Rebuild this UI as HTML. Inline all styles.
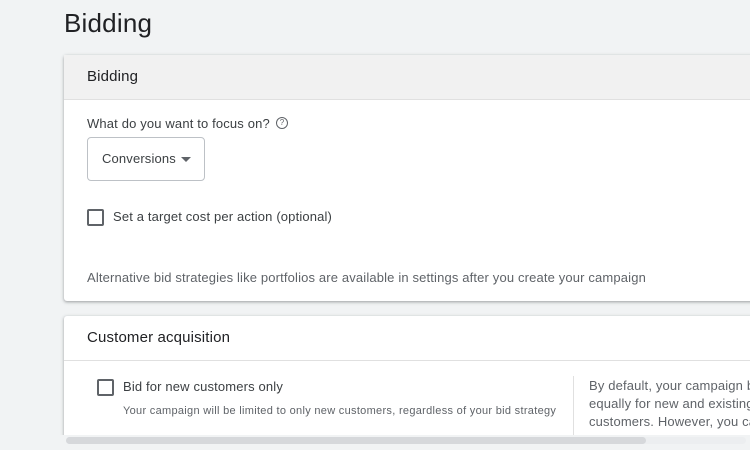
<!DOCTYPE html>
<html><head><style>
html,body{margin:0;width:750px;height:450px;overflow:hidden}
body{background:#f1f3f4;font-family:"Liberation Sans",Arial,sans-serif;position:relative;color:#3c4043}
.h1{position:absolute;left:64px;top:8px;font-size:26px;color:#202124;letter-spacing:0.2px}
.card{position:absolute;left:64px;width:700px;background:#fff;box-shadow:0 1px 2px rgba(60,64,67,.3),0 1px 3px 1px rgba(60,64,67,.15);border-radius:3px}
.hd{height:44px;line-height:44px;padding-left:23px;font-size:15px;color:#202124;border-bottom:1px solid #e0e0e0;letter-spacing:0.15px}
.t{position:absolute;font-size:13px;color:#3c4043;white-space:nowrap;letter-spacing:0.15px}
.cb{position:absolute;width:13px;height:13px;border:2px solid #5f6368;border-radius:2px}
</style></head><body>
<div class="h1">Bidding</div>
<div class="card" style="top:55px;height:246px">
<div class="hd" style="background:#f1f1f1">Bidding</div>
<div class="t" style="left:23px;top:61px">What do you want to focus on?</div>
<div style="position:absolute;left:212px;top:62px;width:10px;height:10px;border:1.3px solid #5f6368;border-radius:50%;font-size:8px;line-height:10px;text-align:center;color:#5f6368">?</div>
<div style="position:absolute;left:23px;top:82px;width:116px;height:42px;border:1px solid #bdc1c6;border-radius:4px"></div>
<div class="t" style="left:38px;top:96px">Conversions</div>
<div style="position:absolute;left:117px;top:102px;width:0;height:0;border-left:5px solid transparent;border-right:5px solid transparent;border-top:5px solid #5f6368"></div>
<div class="cb" style="left:23px;top:154px"></div>
<div class="t" style="left:49px;top:154px">Set a target cost per action (optional)</div>
<div class="t" style="left:23px;top:215px;color:#5f6368">Alternative bid strategies like portfolios are available in settings after you create your campaign</div>
</div>
<div class="card" style="top:316px;height:134px">
<div class="hd">Customer acquisition</div>
<div class="cb" style="left:33px;top:63px"></div>
<div class="t" style="left:59px;top:63px">Bid for new customers only</div>
<div class="t" style="left:59px;top:89px;font-size:11px;color:#5f6368;letter-spacing:0.3px">Your campaign will be limited to only new customers, regardless of your bid strategy</div>
<div style="position:absolute;left:509px;top:60px;width:1px;height:80px;background:#e0e0e0"></div>
<div class="t" style="left:525px;top:61px;line-height:18px;color:#5f6368">By default, your campaign b<br>equally for new and existing<br>customers. However, you ca</div>
</div>
<div style="position:absolute;left:55px;top:435px;width:695px;height:15px;background:#f1f3f4"></div>
<div style="position:absolute;left:66px;top:437px;width:680px;height:7px;background:#eceef0;border-radius:4px"></div>
<div style="position:absolute;left:66px;top:437px;width:580px;height:7px;background:#d6d8db;border-radius:4px"></div>
</body></html>
